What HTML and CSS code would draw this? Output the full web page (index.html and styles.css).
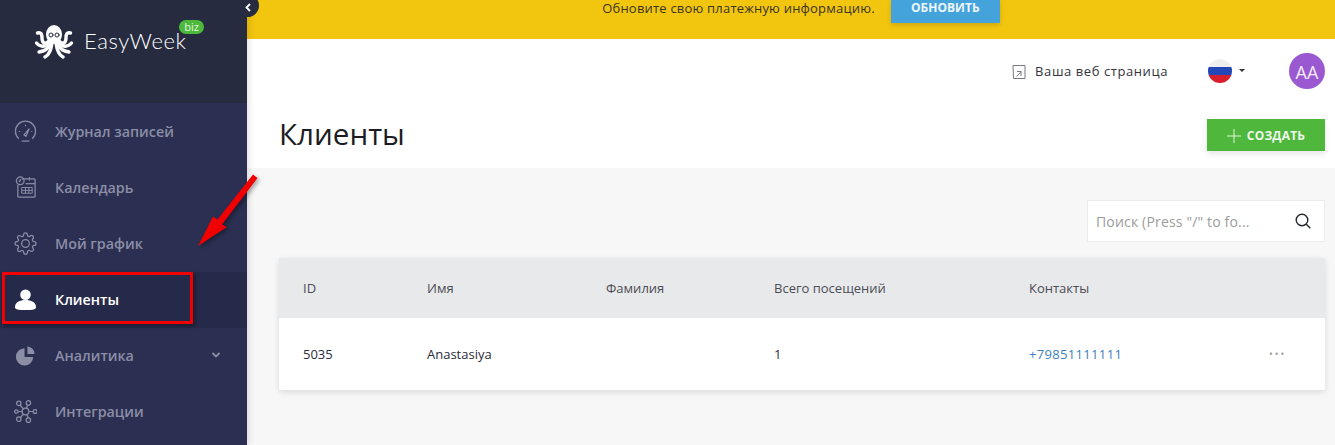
FILE: index.html
```html
<!DOCTYPE html>
<html lang="ru">
<head>
<meta charset="utf-8">
<title>EasyWeek — Клиенты</title>
<link rel="stylesheet" href="styles.css">
</head>
<body>
<div class="app">
  <aside class="sidebar">
    <div class="brand">
      <svg class="octo" width="40" height="34" viewBox="0 0 40 34" fill="none" stroke="#fff" stroke-linecap="round">
        <ellipse cx="20" cy="9.500" rx="8" ry="9.500" fill="#fff" stroke="none"/>
        <path d="M15 16C11 20 8 18 8 13C8 9 7 7 3.500 8" stroke-width="3.400"/>
        <path d="M25 16C29 20 32 18 32 13C32 9 33 7 36.500 8" stroke-width="3.400"/>
        <path d="M15 17C11 23 6 22 2.500 18" stroke-width="3.400"/>
        <path d="M25 17C29 23 34 22 37.500 18" stroke-width="3.400"/>
        <path d="M16 18C14 25 10 26 5 27" stroke-width="3.400"/>
        <path d="M24 18C26 25 30 26 35 27" stroke-width="3.400"/>
        <path d="M18 18C17 26 15 30 11 32" stroke-width="3.400"/>
        <path d="M22 18C23 26 25 30 29 32" stroke-width="3.400"/>
        <circle cx="17" cy="10" r="2" stroke="#262b40" stroke-width="1"/>
        <circle cx="23" cy="10" r="2" stroke="#262b40" stroke-width="1"/>
      </svg>
      <span class="brand-name">EasyWeek</span>
      <span class="brand-tag">biz</span>
    </div>
    <nav class="nav">
      <a class="nav-item">
        <svg class="nav-icon" viewBox="0 0 24 24" fill="none" stroke="currentColor" stroke-width="1.300"><path d="M5 19.500A10.500 10.500 0 1 1 19 19.500"/><path d="M8 22h8"/><path d="M10.500 15.500L16 9l-3.500 8z"/><path d="M12 5v1.500M5 12h1.500M19 12h-1"/></svg>
        <span>Журнал записей</span>
      </a>
      <a class="nav-item">
        <svg class="nav-icon" viewBox="0 0 24 24" fill="none" stroke="currentColor" stroke-width="1.300"><path d="M8 3h13a1 1 0 0 1 1 1v17a1 1 0 0 1-1 1H5a1 1 0 0 1-1-1V9"/><path d="M12 8h10"/><circle cx="6.500" cy="5" r="4"/><path d="M6.500 3v2l-1.500 1"/><path d="M16 1v4M8 12h11v6H8zM8 15h11M12 12v6M15.500 12v6" stroke-width="1"/></svg>
        <span>Календарь</span>
      </a>
      <a class="nav-item">
        <svg class="nav-icon" viewBox="0 0 24 24" fill="none" stroke="currentColor" stroke-width="1.300"><circle cx="12" cy="12" r="4"/><path d="M19.400 15a1.650 1.650 0 0 0 .33 1.820l.06.06a2 2 0 0 1 0 2.830 2 2 0 0 1-2.830 0l-.06-.06a1.650 1.650 0 0 0-1.820-.33 1.650 1.650 0 0 0-1 1.510V21a2 2 0 0 1-2 2 2 2 0 0 1-2-2v-.09A1.650 1.650 0 0 0 9 19.400a1.650 1.650 0 0 0-1.820.33l-.06.06a2 2 0 0 1-2.830 0 2 2 0 0 1 0-2.830l.06-.06a1.650 1.650 0 0 0 .33-1.820 1.650 1.650 0 0 0-1.510-1H3a2 2 0 0 1-2-2 2 2 0 0 1 2-2h.09A1.650 1.650 0 0 0 4.600 9a1.650 1.650 0 0 0-.33-1.820l-.06-.06a2 2 0 0 1 0-2.830 2 2 0 0 1 2.830 0l.06.06a1.650 1.650 0 0 0 1.820.33H9a1.650 1.650 0 0 0 1-1.510V3a2 2 0 0 1 2-2 2 2 0 0 1 2 2v.09a1.650 1.650 0 0 0 1 1.510 1.650 1.650 0 0 0 1.820-.33l.06-.06a2 2 0 0 1 2.830 0 2 2 0 0 1 0 2.830l-.06.06a1.650 1.650 0 0 0-.33 1.820V9a1.650 1.650 0 0 0 1.510 1H21a2 2 0 0 1 2 2 2 2 0 0 1-2 2h-.09a1.650 1.650 0 0 0-1.510 1z"/></svg>
        <span>Мой график</span>
      </a>
      <a class="nav-item active">
        <svg class="nav-icon" viewBox="0 0 24 24" fill="#fff"><circle cx="12" cy="7" r="5.500"/><path d="M1 20c0-5 5-7.500 11-7.500S23 15 23 20c0 2-3 3-11 3S1 22 1 20z"/></svg>
        <span>Клиенты</span>
      </a>
      <a class="nav-item">
        <svg class="nav-icon" viewBox="0 0 24 24" fill="currentColor"><path d="M11 4.500a9 9 0 1 0 9 9h-9z"/><path d="M14 2.500a8 8 0 0 1 7.500 8H14z"/></svg>
        <span>Аналитика</span>
        <svg class="nav-caret" width="10" height="6" viewBox="0 0 10 6" fill="none" stroke="currentColor" stroke-width="1.800"><path d="M1.500 1l3.500 3.500L8.500 1"/></svg>
      </a>
      <a class="nav-item">
        <svg class="nav-icon" viewBox="0 0 24 24" fill="none" stroke="currentColor" stroke-width="1.300"><circle cx="12" cy="12" r="3.500"/><circle cx="5" cy="3.500" r="2.300"/><circle cx="15" cy="3" r="2.300"/><circle cx="22" cy="12" r="2"/><circle cx="15" cy="21" r="2.300"/><circle cx="5" cy="20" r="2.300"/><circle cx="2.500" cy="12" r="1.800"/><path d="M6.500 5.500L10 9.500M14.500 5L13 8.700M15.500 12h4.500M13.500 15l1.300 3.700M10 14.500l-3.500 4M9 12H4.500"/></svg>
        <span>Интеграции</span>
      </a>
    </nav>
  </aside>

  <main class="main">
    <div class="banner">
      <span class="banner-text">Обновите свою платежную информацию.</span>
      <button class="banner-btn">ОБНОВИТЬ</button>
    </div>
    <header class="topbar">
      <a class="site-link">
        <svg width="14" height="14" viewBox="0 0 14 14" fill="none" stroke="#77797f" stroke-width="1"><path d="M1 .5h12v13H1.500zM5 6.500h4.500M9 11V7L4.500 11.500" /></svg>
        <span>Ваша веб страница</span>
      </a>
      <div class="lang">
        <svg class="flag" width="24" height="24" viewBox="0 0 24 24"><defs><clipPath id="flagclip"><circle cx="12" cy="12" r="12"/></clipPath></defs><g clip-path="url(#flagclip)"><rect width="24" height="8.500" fill="#eeeeee"/><rect y="8" width="24" height="8" fill="#2447b8"/><rect y="16" width="24" height="8" fill="#d81e2c"/></g></svg>
        <span class="lang-caret"></span>
      </div>
      <div class="avatar">AA</div>
    </header>
    <div class="titlebar">
      <h1>Клиенты</h1>
      <button class="create-btn">
        <svg width="14" height="14" viewBox="0 0 14 14" stroke="#dff3d8" stroke-width="1"><path d="M7 0v14M0 7h14"/></svg>
        <span>СОЗДАТЬ</span>
      </button>
    </div>
    <section class="content">
      <div class="toolbar">
        <label class="search">
          <input class="search-input" placeholder="Поиск (Press &quot;/&quot; to fo..." size="1">
          <svg width="16" height="16" viewBox="0 0 16 16" fill="none" stroke="#24272c" stroke-width="1.400"><circle cx="7" cy="7" r="5.800"/><path d="M11 11l4.300 4.300"/></svg>
        </label>
      </div>
      <div class="table">
        <div class="row head">
          <div>ID</div><div>Имя</div><div>Фамилия</div><div>Всего посещений</div><div>Контакты</div><div></div>
        </div>
        <div class="row body">
          <div>5035</div><div>Anastasiya</div><div></div><div>1</div><div><a class="phone">+79851111111</a></div><div class="dots">•••</div>
        </div>
      </div>
    </section>
  </main>
</div>

<button class="collapse" aria-label="Свернуть">
  <svg width="6" height="9" viewBox="0 0 6 9" fill="none" stroke="#fff" stroke-width="1.800"><path d="M5 1L1.500 4.500 5 8"/></svg>
</button>
<div class="callout-box"></div>
<svg class="callout-arrow" width="70" height="84" viewBox="0 0 70 84">
  <path d="M55 0.500L59.500 4L24 50.500L29 53L0 72L15 42.500L19.500 45.500z" fill="#f00000"/>
</svg>
</body>
</html>
```
FILE: styles.css
```css
* { box-sizing: border-box; }
html, body { margin: 0; height: 100%; overflow: hidden; }
body { font-family: "Open Sans", "Noto Sans", sans-serif; color: #2c2c3a; background: #fff; position: relative; }
a { text-decoration: none; }
button { font-family: inherit; border: 0; cursor: pointer; }

.app { display: flex; height: 445px; }

.sidebar { width: 247px; flex: none; background: #2b2f52; box-shadow: 2px 0 6px rgba(0,0,0,.12); position: relative; z-index: 2; }
.brand { height: 103px; background: #262b40; display: flex; align-items: flex-start; padding: 25px 0 0 34px; position: relative; }
.octo { flex: none; }
.brand-name { font-family: "Lato", sans-serif; font-weight: 300; font-size: 22px; line-height: 24px; color: #fff; margin: 4px 0 0 10px; letter-spacing: .6px; }
.brand-tag { position: absolute; left: 179px; top: 20px; width: 25px; height: 14px; border-radius: 7px; background: #4cb83c; color: #e6f6e2; font-size: 11px; line-height: 13px; text-align: center; }

.nav { padding-top: 1px; }
.nav-item { height: 56px; display: flex; align-items: center; padding: 0 0 2px 14px; font-size: 14.300px; font-weight: 600; color: #8c8ea6; position: relative; }
.nav-icon { width: 23px; height: 23px; flex: none; margin-right: 18px; }
.nav-item.active { background: #262a4a; color: #fff; }
.nav-caret { position: absolute; left: 211px; top: 24px; }

.main { flex: 1; min-width: 0; display: flex; flex-direction: column; }
.banner { height: 39px; background: #f2c50f; display: flex; justify-content: center; align-items: flex-start; gap: 16px; padding-left: 20px; }
.banner-text { font-size: 13px; line-height: 17px; color: #3a3420; letter-spacing: .2px; }
.banner-btn { width: 109px; height: 23px; background: #45a3dc; color: #eef7fd; font-size: 12px; font-weight: 700; line-height: 14px; padding: 0 0 7px; box-shadow: 0 2px 5px rgba(0,0,0,.15); }

.topbar { height: 63px; display: flex; align-items: center; justify-content: flex-end; padding-right: 10px; background: #fff; }
.site-link { display: flex; align-items: center; gap: 9px; font-size: 13px; color: #33333f; letter-spacing: .58px; margin-right: 40px; }
.site-link svg { margin-top: 3px; }
.lang { display: flex; align-items: center; gap: 7px; margin-right: 44px; }
.flag { display: block; }
.lang-caret { width: 0; height: 0; border-left: 3px solid transparent; border-right: 3px solid transparent; border-top: 3px solid #33333f; }
.avatar { width: 36px; height: 36px; border-radius: 50%; background: #9a59d0; color: #f3ecf9; font-size: 18px; line-height: 38px; text-align: center; }

.titlebar { height: 66px; background: #fff; display: flex; justify-content: space-between; padding: 0 10px 0 32px; }
h1 { margin: 0; font-size: 29.600px; font-weight: 400; line-height: 38px; color: #1c1c24; padding-top: 13px; }
.create-btn { width: 118px; height: 32px; margin-top: 17px; padding: 1px 0 0; background: #4fb83c; color: #eef8eb; display: flex; align-items: center; justify-content: center; gap: 6px; font-size: 12px; font-weight: 700; box-shadow: 0 3px 6px rgba(0,0,0,.1); letter-spacing: .2px; }

.content { flex: 1; background: #f7f7f7; padding: 32px 10px 0 32px; min-height: 0; }
.toolbar { display: flex; justify-content: flex-end; }
.search { width: 238px; height: 42px; background: #fff; border: 1px solid #ececec; display: flex; align-items: center; padding: 0 13px 0 8px; }
.search-input { flex: 1; min-width: 0; border: 0; outline: 0; background: transparent; font-family: inherit; font-size: 14px; letter-spacing: .17px; color: #333; padding: 0; }
.search-input::placeholder { color: #9c9c9c; opacity: 1; }
.search svg { flex: none; }

.table { margin-top: 16px; box-shadow: 0 2px 6px rgba(0,0,0,.12); border-radius: 2px; }
.row { display: grid; grid-template-columns: 124px 179px 168px 255px 240px 1fr; padding-left: 24px; align-items: center; font-size: 13px; }
.head { height: 60px; background: #e8e9eb; color: #4c4c55; padding-bottom: 1px; }
.body { height: 72px; background: #fff; color: #2c2c3a; border-radius: 3px 3px 2px 2px; }
.phone { color: #3c7fc0; letter-spacing: .33px; }
.dots { color: #9a9aa0; font-size: 10px; letter-spacing: 2px; line-height: 1; }

.collapse { position: absolute; left: 236px; top: -6px; width: 23px; height: 23px; border-radius: 50%; background: #262b40; z-index: 3; padding: 3px 0 0; }
.collapse svg { display: block; margin: 0 auto; }
.callout-box { position: absolute; left: 2px; top: 272px; width: 191px; height: 52px; border: 3px solid #f00000; box-shadow: 2px 2px 4px rgba(0,0,0,.4); z-index: 4; }
.callout-arrow { position: absolute; left: 198px; top: 174px; z-index: 4; filter: drop-shadow(2px 2px 2px rgba(0,0,0,.35)); }
```
